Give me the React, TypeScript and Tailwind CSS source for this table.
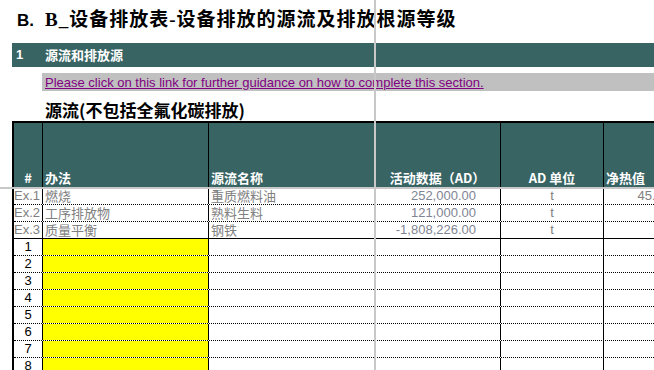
import React from 'react';

const sans = "font-['Liberation_Sans','Noto_Sans_CJK_SC',sans-serif]";
const cjk = "font-['Noto_Sans_CJK_SC','Liberation_Sans',sans-serif]";

const examples = [
    { id: 'Ex.1', method: '燃烧', name: '重质燃料油', ad: '252,000.00', unit: 't', ncv: '45.00' },
    { id: 'Ex.2', method: '工序排放物', name: '熟料生料', ad: '121,000.00', unit: 't', ncv: '' },
    { id: 'Ex.3', method: '质量平衡', name: '钢铁', ad: '-1,808,226.00', unit: 't', ncv: '' },
];

const cols = 'grid grid-cols-[29px_166px_166px_126px_103px_90px]';

export default function App() {
    return (
        <div className={`relative w-[654px] h-[370px] overflow-hidden bg-white ${sans}`}>
            {/* Title */}
            <div className="flex items-center h-[43px] pl-[17px] pb-[2px]">
                <span className="w-[28px] text-[17px] font-bold text-black">B.</span>
                <span className="text-[19px] font-bold text-black tracking-[1px] font-['Liberation_Serif','Noto_Sans_CJK_SC',serif]">
                    B_设备排放表-设备排放的源流及排放根源等级
                </span>
            </div>

            {/* Section bar */}
            <div className="ml-[12px] h-[24px] bg-[#386464] flex items-center text-white font-bold">
                <span className="w-[33px] pl-[4px] text-[13px]">1</span>
                <span className={`text-[13px] ${cjk}`}>源流和排放源</span>
            </div>

            {/* Guidance link */}
            <div className="ml-[42px] mt-[6px] h-[18px] bg-[#c0c0c0] flex items-center pl-[3px]">
                <a className="text-[13px] leading-none text-[#800080] underline">
                    Please click on this link for further guidance on how to complete this section.
                </a>
            </div>

            {/* Sub heading */}
            <div className={`ml-[45px] h-[30px] flex items-end text-[17px] leading-[22px] font-bold text-black ${cjk}`}>
                源流(不包括全氟化碳排放)
            </div>

            {/* Table */}
            <div className="ml-[12px] w-[700px] border-l-2 border-t-2 border-black">
                <div className={`${cols} h-[65px] bg-[#386464] text-white font-bold text-[13px] leading-[17px] ${cjk}`}>
                    <div className="border-r border-black flex items-end justify-center pb-[2px]">#</div>
                    <div className="border-r border-black flex items-end pl-[2px] pb-[2px]">办法</div>
                    <div className="flex items-end pl-[2px] pb-[2px]">源流名称</div>
                    <div className="border-r border-black flex items-end justify-center pb-[2px]">活动数据（AD）</div>
                    <div className="border-r border-black flex items-end justify-center pb-[2px]">AD 单位</div>
                    <div className="flex items-end pl-[2px] pb-[2px]">净热值</div>
                </div>

                {examples.map((r, i) => (
                    <div
                        key={r.id}
                        className={`${cols} h-[17px] text-[13px] leading-[16px] text-[#808080] border-b ${i === 2 ? 'border-solid border-black' : 'border-dotted border-black'}`}
                    >
                        <div className="border-r border-black">{r.id}</div>
                        <div className={`border-r border-black pl-[2px] ${cjk}`}>{r.method}</div>
                        <div className={`pl-[2px] ${cjk}`}>{r.name}</div>
                        <div className="border-r border-black text-right pr-[24px] text-[#7f8594]">{r.ad}</div>
                        <div className="border-r border-black text-center">{r.unit}</div>
                        <div className="text-right pr-[24px]">{r.ncv}</div>
                    </div>
                ))}

                {[1, 2, 3, 4, 5, 6, 7, 8].map((n) => (
                    <div key={n} className={`${cols} h-[17px] text-[13px] leading-[16px] border-b border-dotted border-black`}>
                        <div className="border-r border-black text-center text-black">{n}</div>
                        <div className="border-r border-black bg-[#ffff00]"></div>
                        <div></div>
                        <div className="border-r border-black"></div>
                        <div className="border-r border-black"></div>
                        <div></div>
                    </div>
                ))}
            </div>

            {/* Frozen pane dividers */}
            <div className="absolute left-0 top-[187px] w-full h-[2px] bg-[#c8c8c8]"></div>
            <div className="absolute top-0 left-[374px] w-[2px] h-full bg-[#c8c8c8]"></div>
        </div>
    );
}
